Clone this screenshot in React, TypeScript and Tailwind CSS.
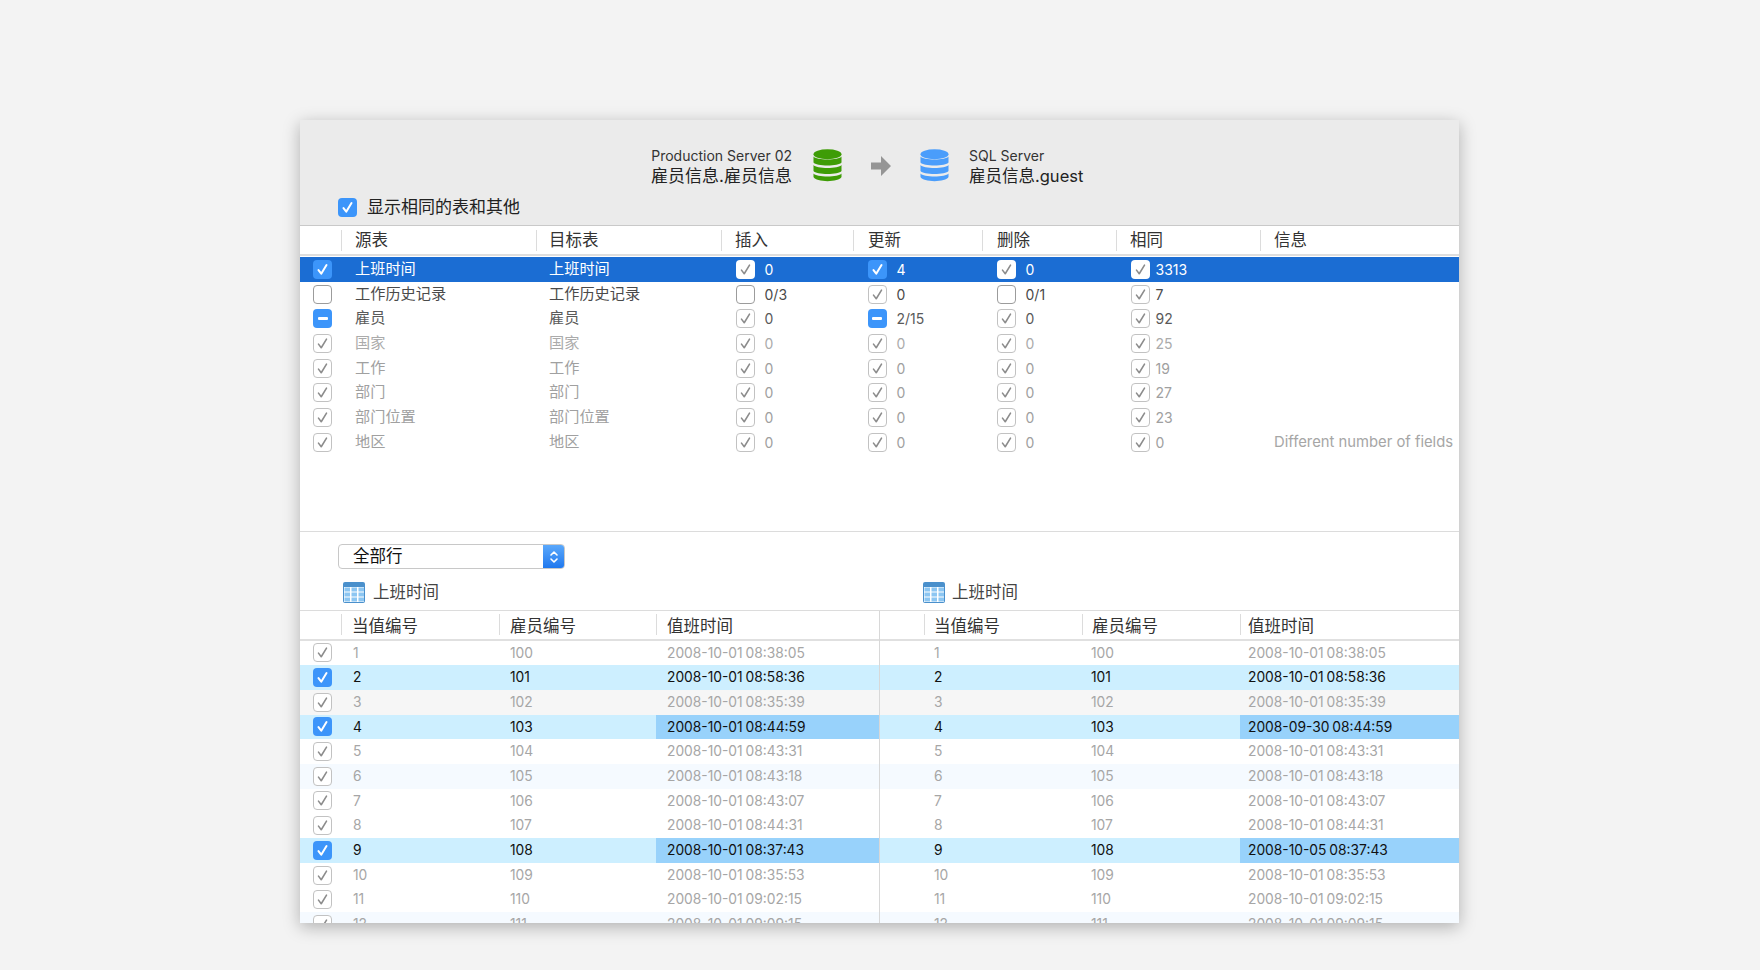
import React from 'react';

type CheckKind = 'on' | 'off' | 'mixed' | 'muted' | 'plain';

const Check: React.FC<{ kind: CheckKind }> = ({ kind }) => {
  if (kind === 'on' || kind === 'mixed') {
    return (
      <span className="flex h-[19px] w-[19px] shrink-0 items-center justify-center rounded-[4px] bg-[#3c95fa]">
        {kind === 'on' ? (
          <svg viewBox="0 0 18 18" className="h-[19px] w-[19px]" fill="none" stroke="#fff" strokeWidth={1.9} strokeLinecap="round" strokeLinejoin="round">
            <path d="M5.2 9.6 L7.8 13 L12.8 4.8" />
          </svg>
        ) : (
          <span className="h-[2.5px] w-[10px] rounded-[1px] bg-white" />
        )}
      </span>
    );
  }
  if (kind === 'off') {
    return <span className="block h-[19px] w-[19px] shrink-0 rounded-[4px] border border-[#9c9c9c] bg-white" />;
  }
  return (
    <span className={`flex h-[19px] w-[19px] shrink-0 items-center justify-center rounded-[4px] bg-white ${kind === 'plain' ? '' : 'border border-[#c2c2c2]'}`}>
      <svg viewBox="0 0 18 18" className="h-[19px] w-[19px] shrink-0" fill="none" stroke="#8c8c8c" strokeWidth={1.5} strokeLinecap="round" strokeLinejoin="round">
        <path d="M5.2 9.6 L7.8 13 L12.8 4.8" />
      </svg>
    </span>
  );
};

const DbIcon: React.FC<{ color: string }> = ({ color }) => (
  <svg viewBox="0 0 29 33" className="h-[33px] w-[29px]">
    <ellipse cx="14.5" cy="5.2" rx="14" ry="5" fill={color} />
    <path d="M0.5 7.5 C3 11.5 26 11.5 28.5 7.5 V13.5 C26 17.5 3 17.5 0.5 13.5 Z" fill={color} />
    <path d="M0.5 16 C3 20 26 20 28.5 16 V22 C26 26 3 26 0.5 22 Z" fill={color} />
    <path d="M0.5 24.5 C3 28.5 26 28.5 28.5 24.5 V28 C26 33.5 3 33.5 0.5 28 Z" fill={color} />
  </svg>
);

const TableIcon: React.FC = () => (
  <svg viewBox="0 0 22 21" className="h-[21px] w-[22px] shrink-0">
    <rect x="0" y="0" width="22" height="21" rx="2" fill="#4a90cc" />
    <rect x="1" y="5" width="20" height="15" fill="#fff" />
    {[1.5, 8.5, 15.5].map((x) =>
      [5.5, 10.5, 15.5].map((y) => <rect key={`${x}-${y}`} x={x} y={y} width="5.5" height="4" fill="#8cc6f2" />)
    )}
  </svg>
);

const HeadCell: React.FC<{ label?: string; pad: string }> = ({ label, pad }) => (
  <div className="flex h-[21px] items-center border-l border-[#dcdcdc]">
    <span className={pad}>{label}</span>
  </div>
);

type Stat = { kind: CheckKind; value: string };
type TopRow = { name: string; kind: CheckKind; tone: string; stats: Stat[]; info?: string; selected?: boolean };

const m = (value: string): Stat => ({ kind: 'muted', value });

const topRows: TopRow[] = [
  {
    name: '上班时间',
    kind: 'on',
    tone: 'text-white',
    selected: true,
    stats: [
      { kind: 'plain', value: '0' },
      { kind: 'on', value: '4' },
      { kind: 'plain', value: '0' },
      { kind: 'plain', value: '3313' },
    ],
  },
  {
    name: '工作历史记录',
    kind: 'off',
    tone: 'text-[#4a4a4a]',
    stats: [{ kind: 'off', value: '0/3' }, m('0'), { kind: 'off', value: '0/1' }, m('7')],
  },
  {
    name: '雇员',
    kind: 'mixed',
    tone: 'text-[#5a5a5a]',
    stats: [m('0'), { kind: 'mixed', value: '2/15' }, m('0'), m('92')],
  },
  { name: '国家', kind: 'muted', tone: 'text-[#ababab]', stats: [m('0'), m('0'), m('0'), m('25')] },
  { name: '工作', kind: 'muted', tone: 'text-[#a0a0a0]', stats: [m('0'), m('0'), m('0'), m('19')] },
  { name: '部门', kind: 'muted', tone: 'text-[#a0a0a0]', stats: [m('0'), m('0'), m('0'), m('27')] },
  { name: '部门位置', kind: 'muted', tone: 'text-[#a0a0a0]', stats: [m('0'), m('0'), m('0'), m('23')] },
  {
    name: '地区',
    kind: 'muted',
    tone: 'text-[#a0a0a0]',
    stats: [m('0'), m('0'), m('0'), m('0')],
    info: 'Different number of fields',
  },
];

type DataRow = { id: string; emp: string; left: string; right: string; bg: string; active?: boolean; diff?: boolean };

const dataRows: DataRow[] = [
  { id: '1', emp: '100', left: '2008-10-01 08:38:05', right: '2008-10-01 08:38:05', bg: 'bg-white' },
  { id: '2', emp: '101', left: '2008-10-01 08:58:36', right: '2008-10-01 08:58:36', bg: 'bg-[#cdefff]', active: true },
  { id: '3', emp: '102', left: '2008-10-01 08:35:39', right: '2008-10-01 08:35:39', bg: 'bg-[#f6f6f6]' },
  { id: '4', emp: '103', left: '2008-10-01 08:44:59', right: '2008-09-30 08:44:59', bg: 'bg-[#cdefff]', active: true, diff: true },
  { id: '5', emp: '104', left: '2008-10-01 08:43:31', right: '2008-10-01 08:43:31', bg: 'bg-white' },
  { id: '6', emp: '105', left: '2008-10-01 08:43:18', right: '2008-10-01 08:43:18', bg: 'bg-[#f5faff]' },
  { id: '7', emp: '106', left: '2008-10-01 08:43:07', right: '2008-10-01 08:43:07', bg: 'bg-white' },
  { id: '8', emp: '107', left: '2008-10-01 08:44:31', right: '2008-10-01 08:44:31', bg: 'bg-white' },
  { id: '9', emp: '108', left: '2008-10-01 08:37:43', right: '2008-10-05 08:37:43', bg: 'bg-[#cdefff]', active: true, diff: true },
  { id: '10', emp: '109', left: '2008-10-01 08:35:53', right: '2008-10-01 08:35:53', bg: 'bg-white' },
  { id: '11', emp: '110', left: '2008-10-01 09:02:15', right: '2008-10-01 09:02:15', bg: 'bg-white' },
  { id: '12', emp: '111', left: '2008-10-01 09:09:15', right: '2008-10-01 09:09:15', bg: 'bg-[#f5faff]' },
];

const DataPanel: React.FC<{ side: 'left' | 'right' }> = ({ side }) => {
  const isLeft = side === 'left';
  const cols = isLeft ? 'grid-cols-[41px_158px_157px_1fr]' : 'grid-cols-[44px_158px_158px_1fr]';
  const pad = isLeft ? 'pl-[10px]' : 'pl-[9px]';
  return (
    <div className={`flex min-w-0 flex-col ${isLeft ? 'w-[580px] border-r border-[#d8d8d8]' : 'flex-1'}`}>
      <div className={`grid h-[29.5px] items-center border-b-2 border-[#e0e0e0] text-[16.5px] text-[#333] ${cols}`}>
        <div />
        <HeadCell label="当值编号" pad={`${pad} pt-[3px]`} />
        <HeadCell label="雇员编号" pad={`${pad} pt-[3px]`} />
        <HeadCell label="值班时间" pad={`${isLeft ? 'pl-[10px]' : 'pl-[7px]'} pt-[3px]`} />
      </div>
      {dataRows.map((row) => (
        <div key={row.id} className={`grid h-[24.7px] items-center text-[13.8px] [word-spacing:-1px] ${cols} ${row.bg} ${row.active ? 'text-[#111]' : 'text-[#a6a6a6]'}`}>
          <div className="flex pl-[13px]">{isLeft && <Check kind={row.active ? 'on' : 'muted'} />}</div>
          <div className={isLeft ? 'pl-[12px]' : 'pl-[10px]'}>{row.id}</div>
          <div className={isLeft ? 'pl-[11px]' : 'pl-[9px]'}>{row.emp}</div>
          <div className={`flex h-full items-center ${isLeft ? 'pl-[11px]' : 'pl-[8px]'} ${row.diff ? 'bg-[#98d2fb]' : ''}`}>{isLeft ? row.left : row.right}</div>
        </div>
      ))}
    </div>
  );
};

const App: React.FC = () => {
  return (
    <div className="h-[970px] overflow-hidden bg-[#f3f3f3] pt-[120px] pl-[300px] font-['Inter','Noto_Sans_CJK_SC',sans-serif]">
      <div className="flex h-[803px] w-[1159px] flex-col overflow-hidden bg-white shadow-[0_4px_16px_rgba(0,0,0,0.28)]">
        <header className="h-[106px] shrink-0 border-b border-[#c9c9c9] bg-[#ebebeb]">
          <div className="flex h-[66px] items-end">
            <div className="w-[492px] text-right leading-[20px]">
              <div className="text-[14px] text-[#333]">Production Server 02</div>
              <div className="text-[17px] text-[#222]">雇员信息.雇员信息</div>
            </div>
            <div className="ml-[21px] pb-[4px]">
              <DbIcon color="#3e9c06" />
            </div>
            <div className="ml-[29px] pb-[10px]">
              <svg viewBox="0 0 20 20" className="h-[20px] w-[20px]">
                <path d="M0 6.5 H10 V0 L20 10 L10 20 V13.5 H0 Z" fill="#959595" />
              </svg>
            </div>
            <div className="ml-[29px] pb-[4px]">
              <DbIcon color="#4a9dfb" />
            </div>
            <div className="ml-[20px] leading-[20px]">
              <div className="text-[14px] text-[#333]">SQL Server</div>
              <div className="text-[16.5px] text-[#222]">雇员信息.guest</div>
            </div>
          </div>
          <div className="mt-[9px] flex items-center gap-[10px] pl-[38px] text-[17px] text-[#222]">
            <Check kind="on" />
            <span>显示相同的表和其他</span>
          </div>
        </header>

        <div className="grid h-[30px] shrink-0 grid-cols-[41px_195px_185px_132px_129px_134px_144px_1fr] items-center border-b-2 border-[#dedede] text-[16.5px] text-[#333]">
          <div />
          <HeadCell label="源表" pad="pl-[13px]" />
          <HeadCell label="目标表" pad="pl-[12px]" />
          <HeadCell label="插入" pad="pl-[13px]" />
          <HeadCell label="更新" pad="pl-[14px]" />
          <HeadCell label="删除" pad="pl-[14px]" />
          <HeadCell label="相同" pad="pl-[13px]" />
          <HeadCell label="信息" pad="pl-[13px]" />
        </div>

        <div className="h-[276px] shrink-0 border-b border-[#dcdcdc] pt-px">
          {topRows.map((row) => (
            <div
              key={row.name}
              className={`grid h-[24.7px] grid-cols-[41px_195px_185px_132px_129px_134px_144px_1fr] items-center text-[15.2px] ${row.selected ? 'bg-[#1b6dd3]' : ''} ${row.tone}`}
            >
              <div className="flex pl-[13px]">
                <Check kind={row.kind} />
              </div>
              <div className="pl-[14px]">{row.name}</div>
              <div className="pl-[13px]">{row.name}</div>
              {row.stats.map((stat, i) => (
                <div key={i} className="flex items-center gap-[10px] pl-[14.5px] text-[14px]">
                  <Check kind={stat.kind} />
                  <span className={i === 3 ? '-ml-[4px]' : ''}>{stat.value}</span>
                </div>
              ))}
              <div className="whitespace-nowrap pl-[14px] text-[14.8px] text-[#a6a6a6]">{row.info}</div>
            </div>
          ))}
        </div>

        <div className="mt-[12px] ml-[38px] flex h-[25px] w-[227px] shrink-0 overflow-hidden rounded-[4px] border border-[#c8c8c8] bg-white">
          <span className="flex-1 pl-[14px] text-[16.5px] leading-[23px] text-[#111]">全部行</span>
          <span className="flex w-[21px] items-center justify-center bg-gradient-to-b from-[#5aa8fb] to-[#1f78ee]">
            <svg viewBox="0 0 10 16" className="h-[16px] w-[10px]" fill="none" stroke="#fff" strokeWidth={1.6} strokeLinecap="round" strokeLinejoin="round">
              <path d="M2 6 L5 3 L8 6" />
              <path d="M2 10 L5 13 L8 10" />
            </svg>
          </span>
        </div>

        <div className="flex h-[42px] shrink-0 items-center border-b border-[#dcdcdc] pt-[6px] text-[16.5px] text-[#444]">
          <div className="flex w-[580px] items-center gap-[8px] pl-[43px]">
            <TableIcon />
            <span>上班时间</span>
          </div>
          <div className="flex items-center gap-[7px] pl-[43px]">
            <TableIcon />
            <span>上班时间</span>
          </div>
        </div>

        <div className="flex">
          <DataPanel side="left" />
          <DataPanel side="right" />
        </div>
      </div>
    </div>
  );
};

export default App;
